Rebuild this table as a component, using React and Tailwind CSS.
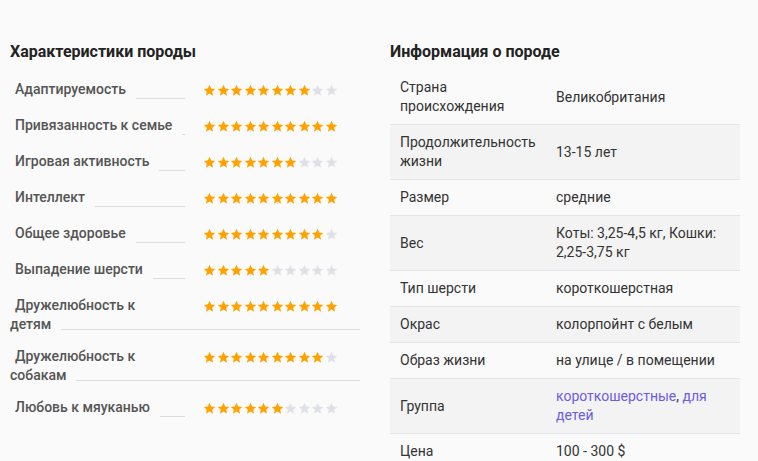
import React from 'react';

const traits = [
    { name: 'Адаптируемость', value: 8 },
    { name: 'Привязанность к семье', value: 10 },
    { name: 'Игровая активность', value: 7 },
    { name: 'Интеллект', value: 10 },
    { name: 'Общее здоровье', value: 9 },
    { name: 'Выпадение шерсти', value: 5 },
    { name: 'Дружелюбность к', rest: 'детям', value: 10 },
    { name: 'Дружелюбность к', rest: 'собакам', value: 9 },
    { name: 'Любовь к мяуканью', value: 6 },
];

const info = [
    { label: 'Страна происхождения', value: 'Великобритания' },
    { label: 'Продолжительность жизни', value: '13-15 лет' },
    { label: 'Размер', value: 'средние' },
    { label: 'Вес', value: 'Коты: 3,25-4,5 кг, Кошки: 2,25-3,75 кг' },
    { label: 'Тип шерсти', value: 'короткошерстная' },
    { label: 'Окрас', value: 'колорпойнт с белым' },
    { label: 'Образ жизни', value: 'на улице / в помещении' },
    { label: 'Группа', links: true },
    { label: 'Цена', value: '100 - 300 $' },
];

const Star = ({ on }) => (
    <svg width="13" height="13" viewBox="0 0 24 24" className={on ? 'fill-[#ffa200]' : 'fill-[#dfe1e6]'}>
        <path d="M12 1.5l3.1 7 7.4.7-5.6 5 1.7 7.4L12 17.7l-6.6 3.9 1.7-7.4-5.6-5 7.4-.7z" />
    </svg>
);

const Stars = ({ value }) => (
    <div className="w-[175px] shrink-0 pl-[18px] pt-[5px] flex">
        {Array.from({ length: 10 }).map((_, i) => (
            <div key={i} className="w-[13.5px] flex">
                <Star on={i < value} />
            </div>
        ))}
    </div>
);

const App = () => {
    return (
        <div className="min-h-screen bg-[#fafafa] [font-family:Roboto,sans-serif] text-[14px] pt-[42px] px-[10px] flex gap-[30px]">

            {/* ХАРАКТЕРИСТИКИ */}
            <div className="w-[350px]">
                <h2 className="text-[16px] leading-[20px] font-bold text-[#222] mb-[17px]">Характеристики породы</h2>
                {traits.map((t, i) => t.rest ? (
                    <div key={i} className="h-[51px]">
                        <div className="flex h-[19px]">
                            <div className="flex-1 pl-[5px] leading-[20px] font-medium text-[#555]">{t.name}</div>
                            <Stars value={t.value} />
                        </div>
                        <div className="flex h-[19px]">
                            <span className="leading-[20px] font-medium text-[#555]">{t.rest}</span>
                            <div className="flex-1 ml-[10px] h-[16px] border-b border-[#dcdcdc]"></div>
                        </div>
                    </div>
                ) : (
                    <div key={i} className="h-[36px] flex">
                        <span className="pl-[5px] leading-[20px] font-medium text-[#555] whitespace-nowrap">{t.name}</span>
                        <div className="flex-1 ml-[10px] h-[20px] border-b border-[#dcdcdc]"></div>
                        <Stars value={t.value} />
                    </div>
                ))}
            </div>

            {/* ИНФОРМАЦИЯ */}
            <div className="w-[350px]">
                <h2 className="text-[16px] leading-[20px] font-bold text-[#222] mb-[8px]">Информация о породе</h2>
                <div className="text-[#333] leading-[19px]">
                    {info.map((r, i) => (
                        <div key={i} className={`flex border-b border-[#e3e3ea] ${i % 2 === 1 ? 'bg-[#f3f3f3]' : ''}`}>
                            <div className="w-[156px] shrink-0 py-[8px] pl-[10px] pr-[6px] flex items-center">{r.label}</div>
                            <div className="flex-1 py-[8px] pl-[10px] pr-[14px] flex items-center">
                                {r.links ? (
                                    <p>
                                        <a className="text-[#6c5ce7]">короткошерстные</a>, <a className="text-[#6c5ce7]">для детей</a>
                                    </p>
                                ) : r.value}
                            </div>
                        </div>
                    ))}
                </div>
            </div>
        </div>
    );
};

export default App;
